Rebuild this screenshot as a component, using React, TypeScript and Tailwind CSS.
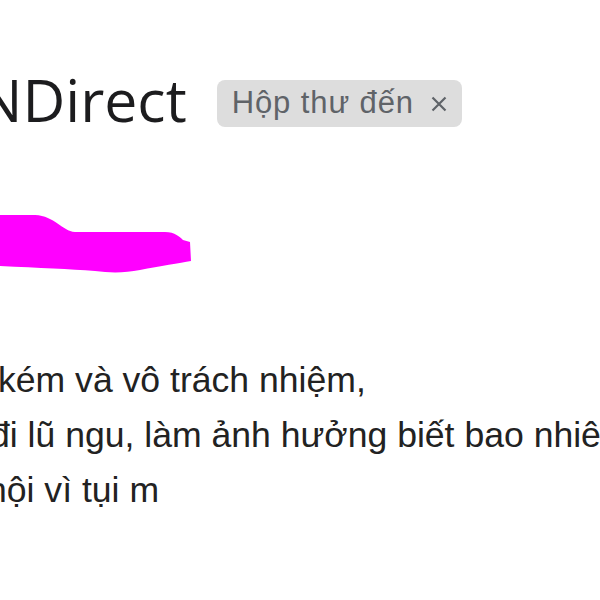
import React from "react";

const BODY_LINES = [
    { text: "kém và vô trách nhiệm,", shift: "ml-[-2px]" },
    { text: "đi lũ ngu, làm ảnh hưởng biết bao nhiêu người", shift: "ml-[-10px]" },
    { text: "hội vì tụi m", shift: "ml-[-13px]" },
];

const Scribble: React.FC = () => (
    <svg width="194" height="64" viewBox="0 0 194 64" className="block">
        <path
            d="M0,2 L35,2 C55,3 62,18 75,19 L165,19 C175,19 180,24 183,27 L190,29 L191,48 C180,50 160,53 140,57 C125,60 110,60 95,58 C70,56 40,55 0,53 Z"
            fill="#ff00ff"
        />
    </svg>
);

const CloseIcon: React.FC = () => (
    <svg width="16" height="16" viewBox="0 0 16 16" className="block">
        <path d="M1.5 1.5 L14.5 14.5 M14.5 1.5 L1.5 14.5" stroke="#5f6368" strokeWidth="2.2" />
    </svg>
);

export default function App() {
    return (
        <div className="h-[600px] w-[600px] overflow-hidden bg-white">
            <div className="flex items-start whitespace-nowrap pt-[69px]">
                <h1 className="ml-[-22px] font-['Open_Sans',sans-serif] text-[59px] leading-[60px] text-[#1c1c1e]">
                    NDirect
                </h1>
                <span className="ml-[30px] mt-[11px] flex h-[47px] items-center gap-[17px] rounded-[8px] bg-[#dddddd] pl-[15px] pr-[15px] font-['Liberation_Sans',Arial,sans-serif] text-[31px] tracking-[0.9px] text-[#5f6368]">
                    Hộp thư đến
                    <CloseIcon />
                </span>
            </div>

            <div className="mt-[84px]">
                <Scribble />
            </div>

            <div className="mt-[76px] whitespace-nowrap font-['Liberation_Sans',Arial,sans-serif] text-[35.6px] leading-[55px] text-[#222222]">
                {BODY_LINES.map((line) => (
                    <p key={line.text} className={line.shift}>
                        {line.text}
                    </p>
                ))}
            </div>
        </div>
    );
}
